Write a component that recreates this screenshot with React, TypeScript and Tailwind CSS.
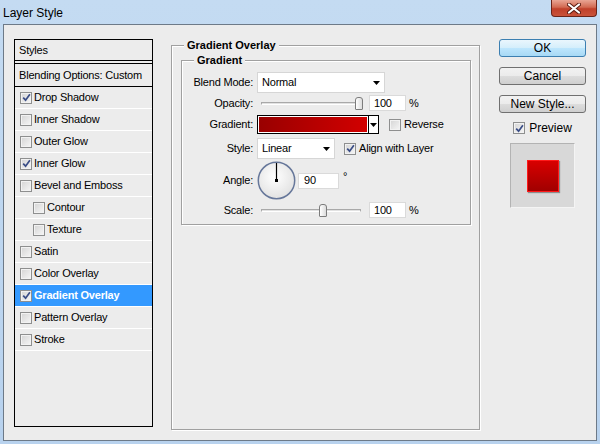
import React from "react";

const items = [
  { label: "Drop Shadow", checked: true },
  { label: "Inner Shadow" },
  { label: "Outer Glow" },
  { label: "Inner Glow", checked: true },
  { label: "Bevel and Emboss" },
  { label: "Contour", indent: true },
  { label: "Texture", indent: true },
  { label: "Satin" },
  { label: "Color Overlay" },
  { label: "Gradient Overlay", checked: true, selected: true },
  { label: "Pattern Overlay" },
  { label: "Stroke" },
];

function Check({ checked }: { checked?: boolean }) {
  return (
    <span className="flex h-[12px] w-[12px] shrink-0 items-center justify-center border border-[#8e8f8f] bg-[linear-gradient(135deg,#d4d4d4,#f6f6f6)] shadow-[inset_0_0_0_1px_#f2f2f2]">
      {checked && (
        <svg width="9" height="9" viewBox="0 0 9 9">
          <path d="M1.2 4.6 L3.6 7.2 L7.9 1.2" stroke="#3a4d86" strokeWidth="1.7" fill="none" />
        </svg>
      )}
    </span>
  );
}

function Caret() {
  return (
    <svg width="7" height="4" viewBox="0 0 7 4">
      <path d="M0 0h7L3.5 4z" fill="#000" />
    </svg>
  );
}

function Select({ value, w }: { value: string; w: string }) {
  return (
    <div className={`flex h-[21px] ${w} items-center justify-between border border-[#d6d6d6] bg-white pl-[4px] pr-[4px]`}>
      <span>{value}</span>
      <Caret />
    </div>
  );
}

function Field({ value, w, pl }: { value: string; w: string; pl: string }) {
  return (
    <div className={`flex h-[16px] ${w} items-center border border-[#dadada] bg-white ${pl}`}>{value}</div>
  );
}

function Slider({ thumb }: { thumb: string }) {
  return (
    <div className="relative flex h-[16px] w-[108px] items-center px-[4px]">
      <div className="h-[3px] w-full border border-[#a9a9a9] border-b-white bg-[#e2e2e2]" />
      <div
        className={`absolute top-[2px] ${thumb} h-[13px] w-[8px] rounded-t-[3px] rounded-b-[1px] border border-[#7c7c7c] bg-[linear-gradient(90deg,#ffffff,#dcdcdc)]`}
      />
    </div>
  );
}

function Row({ label, h, mt, children }: { label: string; h: string; mt: string; children: React.ReactNode }) {
  return (
    <div className={`flex ${h} ${mt} items-center`}>
      <span className="w-[71px] text-right">{label}</span>
      <div className="ml-[4px] flex items-center">{children}</div>
    </div>
  );
}

function Button({ label, primary, mt }: { label: string; primary?: boolean; mt?: string }) {
  return (
    <div
      className={`flex h-[18px] w-[87px] items-center justify-center rounded-[3px] border text-[12px] ${mt ?? ""} ${
        primary
          ? "border-[#3c7fb1] bg-[linear-gradient(#eaf6fd,#d4eefb_50%,#bee6fd_50%,#a7d9f5)]"
          : "border-[#707070] bg-[linear-gradient(#f2f2f2,#ebebeb_50%,#dddddd_50%,#cfcfcf)]"
      }`}
    >
      {label}
    </div>
  );
}

export default function App() {
  return (
    <div className="flex h-[444px] w-[600px] flex-col overflow-hidden bg-[linear-gradient(180deg,#c4dbf2,#b8d2ee)] font-['Liberation_Sans',Arial,sans-serif] text-[11px] tracking-[-0.2px] text-black">
      {/* title bar */}
      <div className="flex h-[24px] shrink-0 justify-between pl-[3px] pr-[3px]">
        <span className="pt-[4px] text-[12px] tracking-normal">Layer Style</span>
        <div className="flex h-[17px] w-[46px] items-center justify-center rounded-b-[4px] border border-t-0 border-[#6b2418] bg-[linear-gradient(#e9a594,#d26a52_45%,#c0402a_55%,#c9533a)]">
          <svg width="14" height="11" viewBox="0 0 14 11">
            <path d="M2 1.5 L12 9.5 M12 1.5 L2 9.5" stroke="#5a1a10" strokeWidth="4" strokeLinecap="round" />
            <path d="M2 1.5 L12 9.5 M12 1.5 L2 9.5" stroke="#fff" strokeWidth="2.2" strokeLinecap="round" />
          </svg>
        </div>
      </div>

      {/* dialog body */}
      <div className="mx-[3px] flex h-[417px] shrink-0 items-start border border-[#6d7a88] bg-[#ececec] pl-[10px] pt-[14px]">
        {/* styles list */}
        <div className="flex h-[388px] w-[139px] shrink-0 flex-col border border-black">
          <div className="flex h-[21px] items-center border-b border-black pl-[4px]">Styles</div>
          <div className="mt-[2px] flex h-[24px] items-center border-y border-black pl-[4px]">Blending Options: Custom</div>
          {items.map((it) => (
            <div key={it.label} className="h-[22px] border-b border-white">
              <div
                className={`flex h-[21px] items-center gap-[2px] ${it.indent ? "pl-[18px]" : "pl-[5px]"} ${
                  it.selected ? "bg-[#3399ff] font-bold text-white" : ""
                }`}
              >
                <Check checked={it.checked} />
                <span>{it.label}</span>
              </div>
            </div>
          ))}
        </div>

        {/* gradient overlay group */}
        <fieldset className="ml-[18px] h-[391px] w-[309px] shrink-0 border border-[#a0a0a0] shadow-[inset_1px_1px_0_#fff,1px_1px_0_#fff]">
          <legend className="ml-[12px] bg-[#ececec] px-[3px] font-bold leading-[13px] tracking-normal">Gradient Overlay</legend>
          <fieldset className="ml-[9px] mt-[2px] w-[290px] border border-[#a0a0a0] pb-[6px] shadow-[inset_1px_1px_0_#fff,1px_1px_0_#fff]">
            <legend className="ml-[12px] bg-[#ececec] px-[3px] font-bold leading-[13px] tracking-normal">Gradient</legend>

            <Row label="Blend Mode:" h="h-[21px]" mt="mt-[5px]">
              <Select value="Normal" w="w-[128px]" />
            </Row>

            <Row label="Opacity:" h="h-[16px]" mt="mt-[2px]">
              <Slider thumb="left-[98px]" />
              <div className="ml-[4px]">
                <Field value="100" w="w-[37px]" pl="pl-[4px]" />
              </div>
              <span className="ml-[3px]">%</span>
            </Row>

            <Row label="Gradient:" h="h-[19px]" mt="mt-[4px]">
              <div className="flex h-[19px] w-[122px] border border-black bg-white">
                <div className="m-[1px] flex-1 bg-[linear-gradient(to_right,#990000,#d20000)]" />
                <div className="flex w-[10px] items-center justify-center border-l border-black bg-white">
                  <Caret />
                </div>
              </div>
              <div className="ml-[10px] flex items-center gap-[3px]">
                <Check />
                <span>Reverse</span>
              </div>
            </Row>

            <Row label="Style:" h="h-[21px]" mt="mt-[4px]">
              <Select value="Linear" w="w-[78px]" />
              <div className="ml-[9px] flex items-center gap-[3px]">
                <Check checked />
                <span>Align with Layer</span>
              </div>
            </Row>

            <Row label="Angle:" h="h-[39px]" mt="mt-[2px]">
              <svg width="39" height="39" viewBox="0 0 39 39">
                <defs>
                  <radialGradient id="dial" cx="45%" cy="40%" r="60%">
                    <stop offset="0%" stopColor="#ffffff" />
                    <stop offset="100%" stopColor="#e2e2e2" />
                  </radialGradient>
                </defs>
                <circle cx="19.5" cy="19.5" r="18.2" fill="url(#dial)" stroke="#66779a" strokeWidth="1.5" />
                <line x1="19.5" y1="2" x2="19.5" y2="19.5" stroke="#000" strokeWidth="1.2" />
                <rect x="18" y="18" width="3" height="3" fill="#000" />
              </svg>
              <div className="ml-[2px]">
                <Field value="90" w="w-[41px]" pl="pl-[5px]" />
              </div>
              <span className="ml-[4px] mb-[8px]">°</span>
            </Row>

            <Row label="Scale:" h="h-[16px]" mt="mt-[2px]">
              <Slider thumb="left-[62px]" />
              <div className="ml-[4px]">
                <Field value="100" w="w-[37px]" pl="pl-[4px]" />
              </div>
              <span className="ml-[3px]">%</span>
            </Row>
          </fieldset>
        </fieldset>

        {/* buttons and preview */}
        <div className="ml-[19px] flex w-[87px] shrink-0 flex-col items-center tracking-normal">
          <Button label="OK" primary />
          <Button label="Cancel" mt="mt-[10px]" />
          <Button label="New Style..." mt="mt-[10px]" />
          <div className="mt-[8px] flex h-[14px] items-center gap-[4px] text-[12px] leading-[14px]">
            <Check checked />
            <span>Preview</span>
          </div>
          <div className="mt-[8px] flex h-[65px] w-[65px] items-center justify-center border border-[#b3b3b3] border-b-[#f4f4f4] border-r-[#f4f4f4] bg-[#d8d8d8]">
            <div className="h-[32px] w-[32px] border border-[#ff1a1a] bg-[linear-gradient(#d80000,#a00000)] shadow-[1px_1px_1px_rgba(0,0,0,0.35)]" />
          </div>
        </div>
      </div>
    </div>
  );
}
